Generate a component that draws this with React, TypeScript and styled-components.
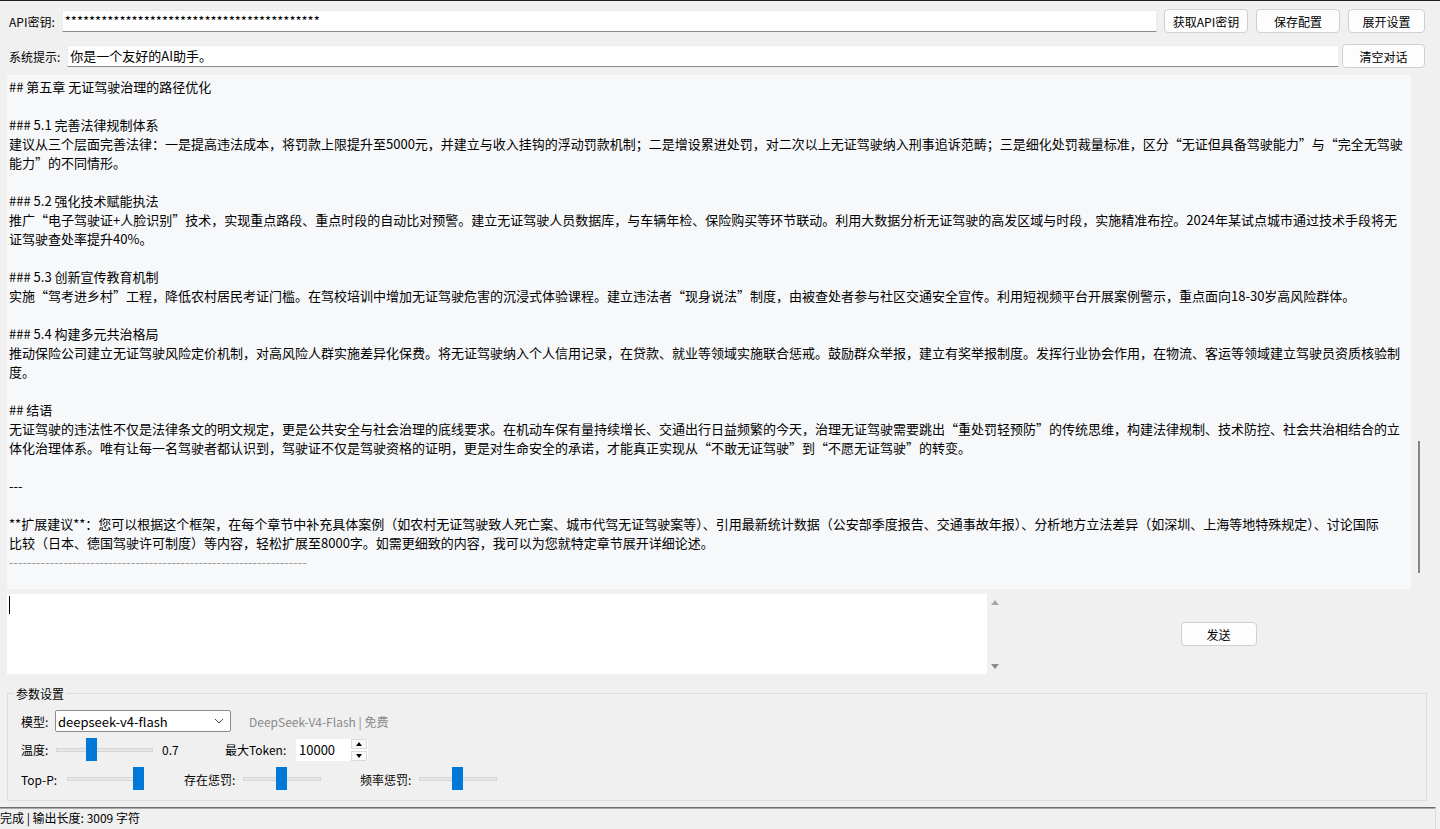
import React from 'react';
import styled, { createGlobalStyle } from 'styled-components';

const GlobalStyle = createGlobalStyle`
  html, body {
    margin: 0;
    padding: 0;
    background: #f0f0f0;
  }
  body {
    font-family: "Noto Sans CJK SC", "Noto Sans", sans-serif;
    font-size: 12px;
    color: #000;
  }
`;

const Window = styled.div`
  width: 1440px;
  height: 829px;
  box-sizing: border-box;
  border-top: 1px solid #1e1e1e;
  display: flex;
  flex-direction: column;
  overflow: hidden;
`;

// 顶部两行：API密钥 / 系统提示
const ConfigRow = styled.div<{ $top: number }>`
  display: flex;
  align-items: center;
  height: 24px;
  margin-top: ${p => p.$top}px;
  padding: 0 15px 0 9px;
`;

const FieldLabel = styled.span`
  white-space: nowrap;
  margin-right: 7px;
  line-height: 17px;
`;

const Entry = styled.div<{ $gap: number }>`
  flex: 1;
  height: 22px;
  box-sizing: border-box;
  margin-right: ${p => p.$gap}px;
  background: #fff;
  border: 1px solid #ececec;
  border-bottom-color: #8a8a8a;
  padding: 0 2px;
  font-size: 13px;
  line-height: 20px;
  white-space: nowrap;
  overflow: hidden;
`;

const Button = styled.button<{ $width: number; $gap?: number }>`
  width: ${p => p.$width}px;
  height: 24px;
  margin: 0 0 0 ${p => p.$gap ?? 0}px;
  padding: 0;
  box-sizing: border-box;
  border: 1px solid #d0d0d0;
  border-radius: 4px;
  background: #fdfdfd;
  font-family: inherit;
  font-size: 12px;
  color: #000;
  flex-shrink: 0;
`;

// 对话输出区
const ChatRow = styled.div`
  display: flex;
  height: 515px;
  margin-top: 7px;
  padding: 0 13px 0 7px;
`;

const ChatText = styled.div`
  flex: 1;
  background: #f7f8fa;
  padding: 2px 0 0 2px;
  font-size: 13px;
  line-height: 19px;
  overflow: hidden;
`;

const ChatLine = styled.div`
  height: 19px;
  white-space: nowrap;
`;

const Divider = styled.div`
  height: 19px;
  color: #9a9a9a;
  white-space: nowrap;
`;

const ScrollTrack = styled.div`
  width: 16px;
  display: flex;
  flex-direction: column;
`;

const ScrollThumb = styled.div`
  width: 2px;
  margin-left: 7px;
  background: #858585;
`;

// 输入区
const InputRow = styled.div`
  display: flex;
  height: 80px;
  margin-top: 5px;
  padding-left: 7px;
`;

const InputBox = styled.div`
  width: 980px;
  background: #fff;
  padding: 2px 0 0 2px;
  box-sizing: border-box;
`;

const Caret = styled.div`
  width: 1px;
  height: 18px;
  background: #000;
`;

const ArrowColumn = styled.div`
  width: 16px;
  display: flex;
  flex-direction: column;
  align-items: center;
  justify-content: space-between;
  padding: 6px 0 5px;
  box-sizing: border-box;
`;

const Triangle = styled.div<{ $dir: 'up' | 'down'; $color: string; $size?: number }>`
  width: 0;
  height: 0;
  border-left: ${p => p.$size ?? 4}px solid transparent;
  border-right: ${p => p.$size ?? 4}px solid transparent;
  ${p => p.$dir === 'up'
    ? `border-bottom: ${(p.$size ?? 4) + 1}px solid ${p.$color};`
    : `border-top: ${(p.$size ?? 4) + 1}px solid ${p.$color};`}
`;

const SendArea = styled.div`
  flex: 1;
  display: flex;
  align-items: center;
  justify-content: center;
  padding-right: 6px;
`;

// 参数设置
const ParamGroup = styled.fieldset`
  margin: 11px 13px 0 7px;
  padding: 0 0 9px 0;
  border: 1px solid #dcdcdc;
  min-width: 0;
`;

const GroupTitle = styled.legend`
  margin-left: 6px;
  padding: 0 2px;
  font-size: 12px;
  line-height: 17px;
`;

const ParamRow = styled.div<{ $top: number; $height: number }>`
  display: flex;
  align-items: center;
  height: ${p => p.$height}px;
  margin-top: ${p => p.$top}px;
  padding-left: 13px;
`;

const Cell = styled.span<{ $width?: number; $muted?: boolean; $gap?: number }>`
  ${p => (p.$width ? `width: ${p.$width}px;` : '')}
  margin-left: ${p => p.$gap ?? 0}px;
  flex-shrink: 0;
  white-space: nowrap;
  color: ${p => (p.$muted ? '#8a8a8a' : '#000')};
  font-size: 12px;
`;

const Combo = styled.div`
  width: 176px;
  height: 22px;
  box-sizing: border-box;
  border: 1px solid #8c8c8c;
  border-radius: 2px;
  background: #fff;
  display: flex;
  align-items: center;
  justify-content: space-between;
  padding: 0 6px 0 2px;
  font-size: 13px;
  flex-shrink: 0;
`;

const SliderTrack = styled.div<{ $width: number }>`
  position: relative;
  width: ${p => p.$width}px;
  height: 24px;
  flex-shrink: 0;
  &::before {
    content: '';
    position: absolute;
    left: 0;
    right: 0;
    top: 10px;
    height: 2px;
    background: #e6e6e6;
    border: 1px solid #d6d6d6;
  }
`;

const SliderThumb = styled.div`
  position: absolute;
  top: 0;
  width: 11px;
  height: 23px;
  background: #0078d7;
`;

const Spin = styled.div`
  width: 72px;
  height: 22px;
  display: flex;
  background: #fff;
  flex-shrink: 0;
`;

const SpinValue = styled.div`
  flex: 1;
  padding-left: 3px;
  font-size: 13px;
  line-height: 21px;
`;

const SpinButtons = styled.div`
  width: 16px;
  display: flex;
  flex-direction: column;
  justify-content: center;
  gap: 2px;
  padding-right: 1px;
`;

const SpinStep = styled.div`
  height: 8px;
  border: 1px solid #dadada;
  background: #fafafa;
  display: flex;
  align-items: center;
  justify-content: center;
`;

const StatusBar = styled.div`
  margin: 6px 4px 0 0;
  height: 21px;
  border-top: 1px solid #6d6d6d;
  border-right: 1px solid #dcdcdc;
  box-shadow: inset 0 1px 0 #a8a8a8;
  line-height: 20px;
  white-space: nowrap;
`;

const chatLines = [
  '## 第五章 无证驾驶治理的路径优化',
  '',
  '### 5.1 完善法律规制体系',
  '建议从三个层面完善法律：一是提高违法成本，将罚款上限提升至5000元，并建立与收入挂钩的浮动罚款机制；二是增设累进处罚，对二次以上无证驾驶纳入刑事追诉范畴；三是细化处罚裁量标准，区分“无证但具备驾驶能力”与“完全无驾驶',
  '能力”的不同情形。',
  '',
  '### 5.2 强化技术赋能执法',
  '推广“电子驾驶证+人脸识别”技术，实现重点路段、重点时段的自动比对预警。建立无证驾驶人员数据库，与车辆年检、保险购买等环节联动。利用大数据分析无证驾驶的高发区域与时段，实施精准布控。2024年某试点城市通过技术手段将无',
  '证驾驶查处率提升40%。',
  '',
  '### 5.3 创新宣传教育机制',
  '实施“驾考进乡村”工程，降低农村居民考证门槛。在驾校培训中增加无证驾驶危害的沉浸式体验课程。建立违法者“现身说法”制度，由被查处者参与社区交通安全宣传。利用短视频平台开展案例警示，重点面向18-30岁高风险群体。',
  '',
  '### 5.4 构建多元共治格局',
  '推动保险公司建立无证驾驶风险定价机制，对高风险人群实施差异化保费。将无证驾驶纳入个人信用记录，在贷款、就业等领域实施联合惩戒。鼓励群众举报，建立有奖举报制度。发挥行业协会作用，在物流、客运等领域建立驾驶员资质核验制',
  '度。',
  '',
  '## 结语',
  '无证驾驶的违法性不仅是法律条文的明文规定，更是公共安全与社会治理的底线要求。在机动车保有量持续增长、交通出行日益频繁的今天，治理无证驾驶需要跳出“重处罚轻预防”的传统思维，构建法律规制、技术防控、社会共治相结合的立',
  '体化治理体系。唯有让每一名驾驶者都认识到，驾驶证不仅是驾驶资格的证明，更是对生命安全的承诺，才能真正实现从“不敢无证驾驶”到“不愿无证驾驶”的转变。',
  '',
  '---',
  '',
  '**扩展建议**：您可以根据这个框架，在每个章节中补充具体案例（如农村无证驾驶致人死亡案、城市代驾无证驾驶案等）、引用最新统计数据（公安部季度报告、交通事故年报）、分析地方立法差异（如深圳、上海等地特殊规定）、讨论国际',
  '比较（日本、德国驾驶许可制度）等内容，轻松扩展至8000字。如需更细致的内容，我可以为您就特定章节展开详细论述。',
];

const Slider = ({ width, at }: { width: number; at: number }) => (
  <SliderTrack $width={width}>
    <SliderThumb style={{ left: at }} />
  </SliderTrack>
);

const Chevron = () => (
  <svg width="10" height="6" viewBox="0 0 10 6">
    <polyline points="1,1 5,5 9,1" fill="none" stroke="#444" strokeWidth="1" />
  </svg>
);

export default function App() {
  const masked = '*'.repeat(42);

  return (
    <>
      <GlobalStyle />
      <Window>
        <ConfigRow $top={8}>
          <FieldLabel>API密钥:</FieldLabel>
          <Entry $gap={7}>{masked}</Entry>
          <Button $width={84}>获取API密钥</Button>
          <Button $width={84} $gap={8}>保存配置</Button>
          <Button $width={77} $gap={8}>展开设置</Button>
        </ConfigRow>

        <ConfigRow $top={11}>
          <FieldLabel>系统提示:</FieldLabel>
          <Entry $gap={3}>你是一个友好的AI助手。</Entry>
          <Button $width={83}>清空对话</Button>
        </ConfigRow>

        <ChatRow>
          <ChatText>
            {chatLines.map((line, i) => (
              <ChatLine key={i}>{line}</ChatLine>
            ))}
            <Divider>{'-'.repeat(66)}</Divider>
          </ChatText>
          <ScrollTrack>
            <ScrollThumb style={{ marginTop: 366, height: 132 }} />
          </ScrollTrack>
        </ChatRow>

        <InputRow>
          <InputBox>
            <Caret />
          </InputBox>
          <ArrowColumn>
            <Triangle $dir="up" $color="#a8a8a8" />
            <Triangle $dir="down" $color="#8a8a8a" />
          </ArrowColumn>
          <SendArea>
            <Button $width={76}>发送</Button>
          </SendArea>
        </InputRow>

        <ParamGroup>
          <GroupTitle>参数设置</GroupTitle>

          <ParamRow $top={8} $height={22}>
            <Cell $width={34}>模型:</Cell>
            <Combo>
              <span>deepseek-v4-flash</span>
              <Chevron />
            </Combo>
            <Cell $muted $gap={18}>DeepSeek-V4-Flash | 免费</Cell>
          </ParamRow>

          <ParamRow $top={6} $height={23}>
            <Cell $width={35}>温度:</Cell>
            <Slider width={97} at={30} />
            <Cell $width={63} $gap={9}>0.7</Cell>
            <Cell $width={71}>最大Token:</Cell>
            <Spin>
              <SpinValue>10000</SpinValue>
              <SpinButtons>
                <SpinStep><Triangle $dir="up" $color="#000" $size={3} /></SpinStep>
                <SpinStep><Triangle $dir="down" $color="#000" $size={3} /></SpinStep>
              </SpinButtons>
            </Spin>
          </ParamRow>

          <ParamRow $top={6} $height={24}>
            <Cell $width={46}>Top-P:</Cell>
            <Slider width={77} at={66} />
            <Cell $width={59} $gap={40}>存在惩罚:</Cell>
            <Slider width={78} at={33} />
            <Cell $width={59} $gap={39}>频率惩罚:</Cell>
            <Slider width={78} at={33} />
          </ParamRow>
        </ParamGroup>

        <StatusBar>完成 | 输出长度: 3009 字符</StatusBar>
      </Window>
    </>
  );
}
